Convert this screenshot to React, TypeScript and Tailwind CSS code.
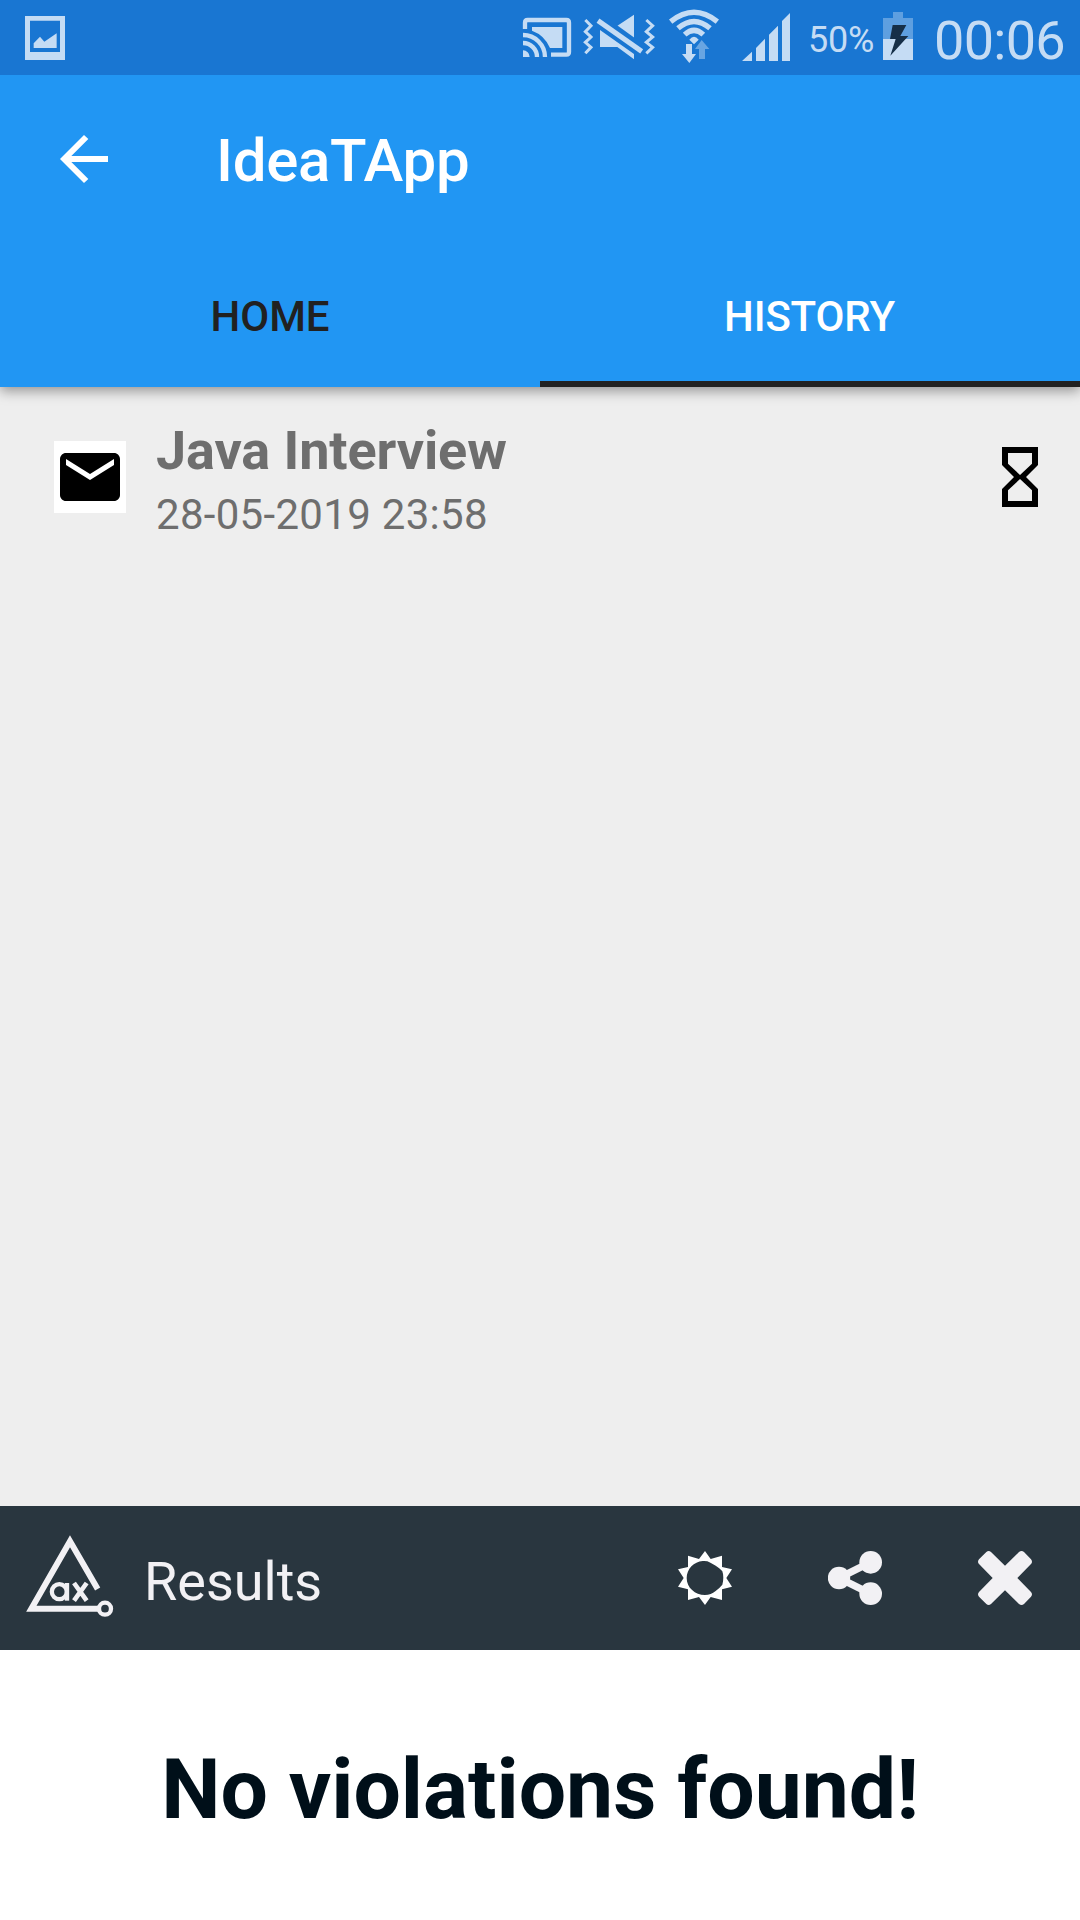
import React from "react";

type IconProps = { box: string; className: string; children: React.ReactNode };

function Icon({ box, className, children }: IconProps) {
  return (
    <svg viewBox={box} className={`block shrink-0 ${className}`} fill="currentColor" aria-hidden="true">
      {children}
    </svg>
  );
}

function StatusBar() {
  return (
    <div className="relative z-20 flex h-[75px] items-center bg-[#1976d2] text-[#c5dcf4]">
      <Icon box="75 0 120 225" className="ml-[25px] h-[75px] w-10">
        <path fillRule="evenodd" d="M75 48h120v132H75zM90 62v94h90V62z" />
        <path d="M101 144v-14l19-20 13 15 37-25v44z" />
      </Icon>

      <Icon box="36 0 150 225" className="ml-[457px] h-[75px] w-[50px]">
        <g fill="none" stroke="currentColor" strokeWidth="13">
          <path d="M45 87V68q0-8 8-8h116q8 0 8 8v88q0 8-8 8h-46" />
          <path d="M39 129a42 42 0 0 1 42 42M39 105a66 66 0 0 1 66 66" />
        </g>
        <path d="M39 151a20 20 0 0 1 20 20H39zM66 81h91v63h-37A93 93 0 0 0 66 92z" />
      </Icon>

      <Icon box="219 0 216 225" className="ml-[11px] h-[75px] w-[72px]">
        <g fill="none" stroke="currentColor" strokeWidth="9">
          <path d="M226 60l17 17-17 18 17 16-17 16 17 15-17 18M409 60l19 17-19 18 19 16-19 16 19 15-19 18" />
        </g>
        <path d="M372 44v72l-52-37zM270 90l102 72v16l-50-37h-52z" />
        <path d="M275 48l133 96" fill="none" stroke="#1976d2" strokeWidth="9" />
        <path d="M264 62l131 92" fill="none" stroke="currentColor" strokeWidth="15" />
      </Icon>

      <Icon box="474 0 156 225" className="ml-[13px] h-[75px] w-[52px]">
        <g fill="none" stroke="currentColor" strokeWidth="16">
          <path d="M482 65Q552 9 622 65M504 85Q552 44 600 85M524 104Q552 78 580 104" />
        </g>
        <path d="M538 119q14-17 28 0l-14 14z" />
        <path d="M528 132h18v30h12l-20 27-22-27h12z" />
        <path d="M567 177v-30h-12l20-27 23 27h-13v30z" fill="#68a5e2" />
      </Icon>

      <Icon box="690 0 153 225" className="ml-5 h-[75px] w-[51px]">
        <path d="M696 183l30-28v28zM738 183v-39l27-28v67zM777 183v-79l27-27v106zM816 183V63l24-24v144z" />
      </Icon>

      <span className="ml-[17px] w-[75px] shrink-0 pt-[5px] text-[36px] leading-none tracking-[-0.2px]">50%</span>

      <Icon box="279 0 90 225" className="h-[75px] w-[30px]">
        <path d="M279 54h30V36h30v18h30v63h-90z" fill="#5e9fe0" />
        <path d="M279 117h90v63h-90z" />
        <path d="M308 75h41l-18 33h24l-54 59 16-50h-17z" fill="#162f48" />
      </Icon>

      <span className="ml-[21px] shrink-0 pt-[6px] text-[54px] leading-none tracking-[-0.7px]">00:06</span>
    </div>
  );
}

function AppBar() {
  return (
    <header className="relative z-10 h-[312px] bg-[#2196f3] text-white shadow-[0_4px_12px_rgba(0,0,0,0.38)]">
      <div className="flex h-[168px] items-center">
        <Icon box="90 105 144 144" className="ml-[60px] h-12 w-12">
          <path d="M162 105l13 12-51 51h110v18H124l51 51-13 12-72-72z" />
        </Icon>
        <h1 className="ml-[108px] pt-[4px] text-[60px] leading-none font-medium tracking-[-0.3px]">IdeaTApp</h1>
      </div>
      <nav className="grid h-[144px] grid-cols-2 text-[42px] leading-none font-medium">
        <div className="flex items-center justify-center pt-[3px] text-[#212121]">HOME</div>
        <div className="flex items-center justify-center border-b-[6px] border-[#212121] pt-[9px] pr-px tracking-[-0.2px]">
          HISTORY
        </div>
      </nav>
    </header>
  );
}

function HistoryList() {
  return (
    <main className="h-[1119px] bg-[#eeeeee]">
      <div className="flex h-[180px] items-center">
        <Icon box="0 0 24 24" className="ml-[54px] h-[72px] w-[72px] bg-white text-black">
          <path d="M20 4H4c-1.100 0-1.990.9-1.990 2L2 18c0 1.100.9 2 2 2h16c1.100 0 2-.9 2-2V6c0-1.100-.9-2-2-2zm0 4l-8 5-8-5V6l8 5 8-5v2z" />
        </Icon>
        <div className="ml-[30px] grow pt-[11px] text-[#6e6e6e]">
          <div className="text-[54px] leading-[64px] font-bold tracking-[-0.1px]">Java Interview</div>
          <div className="text-[42px] leading-[64px] tracking-[0.3px]">28-05-2019 23:58</div>
        </div>
        <Icon box="126 81 108 180" className="mr-[42px] h-[60px] w-9 text-black">
          <path
            fillRule="evenodd"
            d="M126 81h108v54l-36 36 36 36v54H126v-54l36-36-36-36zM144 99v32l36 34 36-34V99zM180 177l-36 34v32h72v-32z"
          />
        </Icon>
      </div>
    </main>
  );
}

function ResultsBar() {
  return (
    <div className="flex h-[144px] items-center bg-[#29363f] text-[#f2f1f4]">
      <Icon box="75 48 270 432" className="ml-[25px] h-[144px] w-[90px]">
        <g fill="none" stroke="currentColor">
          <path d="M293 297L210 154 94 356h202" strokeWidth="18" />
          <circle cx="315" cy="356" r="18" strokeWidth="13" />
          <circle cx="178" cy="305" r="22.500" strokeWidth="13" />
          <path d="M201 279v53" strokeWidth="13" />
          <path d="M222 279l38 53M260 279l-38 53" strokeWidth="14" />
        </g>
      </Icon>
      <h2 className="ml-[29px] grow pt-[7px] text-[54px] leading-none">Results</h2>
      <Icon box="114 153 162 162" className="h-[54px] w-[54px] text-white">
        <path
          fillRule="evenodd"
          d="M195 153l17 24 34-10v34l30 7-17 26 17 26-30 8v32l-34-9-17 24-18-24-33 9v-32l-30-8 17-26-17-26 30-7v-34l33 10zM188 183c-26 2-48 24-48 51 0 29 25 51 55 51 12 0 23-4 31-11q12-9 21-20c4-12 4-29 0-40-7-9-34-26-45-30q-7-2-14-1z"
        />
      </Icon>
      <Icon box="564 153 162 162" className="ml-24 h-[54px] w-[54px]">
        <circle cx="597" cy="234" r="33.500" />
        <circle cx="692" cy="187" r="34" />
        <circle cx="692" cy="281" r="34" />
        <path d="M692 187l-95 47 95 47" fill="none" stroke="currentColor" strokeWidth="22" />
      </Icon>
      <Icon box="1014 153 162 162" className="mr-12 ml-24 h-[54px] w-[54px]">
        <path d="M1039 156q7-6 14 0l42 41 42-41q8-6 15 0l21 22q6 7 0 14l-41 42 41 42q6 7 0 14l-21 22q-7 6-15 0l-42-41-42 41q-7 6-14 0l-22-22q-6-7 0-14l41-42-41-42q-6-7 0-14z" />
      </Icon>
    </div>
  );
}

export default function App() {
  return (
    <div className="flex h-[1920px] w-[1080px] flex-col overflow-hidden bg-white font-['Roboto',sans-serif]">
      <StatusBar />
      <AppBar />
      <HistoryList />
      <ResultsBar />
      <section className="flex h-[270px] items-center justify-center bg-white pt-[9px]">
        <p className="text-[84px] leading-none font-bold text-[#000f19]">No violations found!</p>
      </section>
    </div>
  );
}
